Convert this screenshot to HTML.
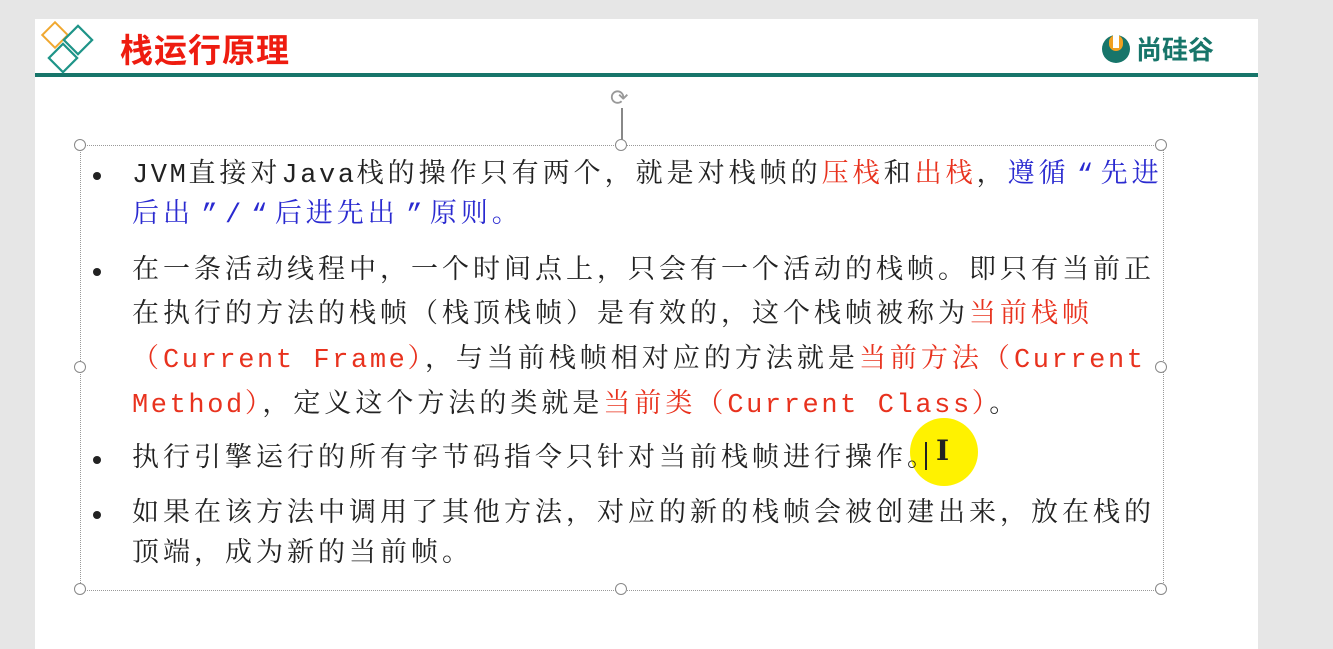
<!DOCTYPE html>
<html><head><meta charset="utf-8"><style>
body{margin:0;width:1333px;height:641px;background:#e6e6e6;position:relative;overflow:hidden;font-family:"Liberation Mono","Noto Serif CJK SC",serif;}
.slide{position:absolute;left:35px;top:19px;width:1223px;height:630px;background:#fff;}
.bar{position:absolute;left:35px;top:73px;width:1223px;height:4px;background:#17756a;}
.title{position:absolute;left:120px;top:24px;font:bold 33px "Noto Sans CJK SC",sans-serif;color:#ee1c10;letter-spacing:1px;}
.l{position:absolute;left:132px;height:40px;line-height:40px;font-size:27px;letter-spacing:4px;white-space:nowrap;color:#222;}
.m{font-style:normal;letter-spacing:2.6px;}
.q{display:inline-block;width:31px;text-align:center;letter-spacing:0;}
.b{position:absolute;left:93px;width:8px;height:8px;border-radius:50%;background:#222;}
.r{color:#e8321e}.u{color:#2a2ad0}
.h{position:absolute;width:10px;height:10px;border:1.5px solid #888;border-radius:50%;background:#fff;}
</style></head><body>
<div class="slide"></div>
<div class="bar"></div>
<svg style="position:absolute;left:38px;top:18px" width="62" height="58">
<rect x="8" y="8" width="18" height="18" fill="none" stroke="#f0a830" stroke-width="2" transform="rotate(45 17 17)"/>
<rect x="30" y="12" width="20" height="20" fill="none" stroke="#1e9488" stroke-width="2.2" transform="rotate(45 40 22)"/>
<rect x="15" y="30" width="20" height="20" fill="none" stroke="#1e9488" stroke-width="2.2" transform="rotate(45 25 40)"/>
</svg>
<div class="title">栈运行原理</div>
<svg style="position:absolute;left:1100px;top:32px" width="36" height="34">
<circle cx="16" cy="17" r="14" fill="#17756a"/><rect x="9" y="3" width="14" height="16" rx="7" fill="#f0a020"/><rect x="13" y="3" width="6" height="13" fill="#fff"/>
</svg>
<div style="position:absolute;left:1136px;top:30px;font:bold 26px 'Noto Sans CJK SC',sans-serif;color:#17756a">尚硅谷</div>
<div style="position:absolute;left:80px;top:145px;width:1082px;height:444px;border:1.5px dotted #999;"></div>
<div style="position:absolute;left:621px;top:108px;width:1.5px;height:36px;background:#888"></div>
<div style="position:absolute;left:610px;top:86px;font-size:22px;color:#999;font-family:'DejaVu Sans'">⟳</div>
<div class="h" style="left:74px;top:139px"></div><div class="h" style="left:615px;top:139px"></div><div class="h" style="left:1155px;top:139px"></div>
<div class="h" style="left:74px;top:361px"></div><div class="h" style="left:1155px;top:361px"></div>
<div class="h" style="left:74px;top:583px"></div><div class="h" style="left:615px;top:583px"></div><div class="h" style="left:1155px;top:583px"></div>
<div style="position:absolute;left:910px;top:418px;width:68px;height:68px;border-radius:50%;background:#fff200"></div>
<div style="position:absolute;left:925px;top:442px;width:2px;height:28px;background:#222"></div>
<div style="position:absolute;left:936px;top:434px;font:bold 28px 'DejaVu Serif',serif;color:#222">I</div>
<div class="b" style="top:172px"></div><div class="b" style="top:268px"></div><div class="b" style="top:456px"></div><div class="b" style="top:511px"></div>
<div class="l" style="top:156px"><i class="m">JVM</i>直接对<i class="m">Java</i>栈的操作只有两个，就是对栈帧的<span class="r">压栈</span>和<span class="r">出栈</span>，<span class="u">遵循<span class="q">“</span>先进</span></div>
<div class="l u" style="top:196px">后出<span class="q">”</span><i class="m">/</i><span class="q">“</span>后进先出<span class="q">”</span>原则。</div>
<div class="l" style="top:252px">在一条活动线程中，一个时间点上，只会有一个活动的栈帧。即只有当前正</div>
<div class="l" style="top:296px">在执行的方法的栈帧（栈顶栈帧）是有效的，这个栈帧被称为<span class="r">当前栈帧</span></div>
<div class="l" style="top:341px"><span class="r">（<i class="m">Current Frame</i>）</span>，与当前栈帧相对应的方法就是<span class="r">当前方法（<i class="m">Current</i></span></div>
<div class="l" style="top:386px"><span class="r"><i class="m">Method</i>）</span>，定义这个方法的类就是<span class="r">当前类（<i class="m">Current Class</i>）</span>。</div>
<div class="l" style="top:440px">执行引擎运行的所有字节码指令只针对当前栈帧进行操作。</div>
<div class="l" style="top:495px">如果在该方法中调用了其他方法，对应的新的栈帧会被创建出来，放在栈的</div>
<div class="l" style="top:535px">顶端，成为新的当前帧。</div>
</body></html>
